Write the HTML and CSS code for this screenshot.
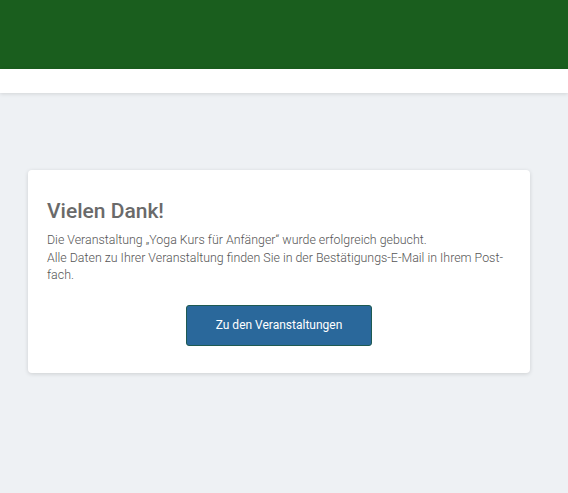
FILE: index.html
```html
<!DOCTYPE html>
<html lang="de">
<head>
<meta charset="utf-8">
<title>Vielen Dank</title>
<link rel="stylesheet" href="styles.css">
</head>
<body>
<header class="topbar"></header>
<nav class="subbar"></nav>
<main class="main">
  <section class="card">
    <h1 class="title">Vielen Dank!</h1>
    <p class="text">Die Veranstaltung „Yoga Kurs für Anfänger“ wurde erfolgreich gebucht.</p>
    <p class="text">Alle Daten zu Ihrer Veranstaltung finden Sie in der Bestätigungs-E-Mail in Ihrem Post-fach.</p>
    <div class="actions">
      <a class="button" href="#">Zu den Veranstaltungen</a>
    </div>
  </section>
</main>
</body>
</html>
```

FILE: styles.css
```css
html, body {
  margin: 0;
  padding: 0;
}
body {
  background: #eef1f4;
  font-family: Roboto, "Liberation Sans", sans-serif;
  min-height: 493px;
}
.topbar {
  height: 69px;
  background: #1a5e1e;
}
.subbar {
  height: 24px;
  background: #ffffff;
  box-shadow: 0 1px 4px rgba(0, 0, 0, 0.12);
  position: relative;
}
.main {
  padding-top: 77px;
}
.card {
  margin-left: 28px;
  width: 502px;
  box-sizing: border-box;
  background: #ffffff;
  border-radius: 4px;
  box-shadow: 0 1px 4px rgba(0, 0, 0, 0.14);
  padding: 28px 24px 27px 19px;
  height: 203px;
}
.title {
  margin: 0 0 7px 0;
  font-size: 21px;
  line-height: 26px;
  font-weight: 500;
  color: #6a6a6a;
}
.text {
  margin: 0;
  font-size: 12.4px;
  line-height: 17.5px;
  font-weight: 300;
  color: #555;
}
.actions {
  display: flex;
  justify-content: center;
  margin-top: 21px;
  padding-left: 5px;
}
.button {
  display: flex;
  align-items: center;
  justify-content: center;
  width: 186px;
  height: 41px;
  box-sizing: border-box;
  background: #2a689b;
  border: 1px solid #1e5a52;
  border-radius: 3px;
  color: #ffffff;
  font-size: 12px;
  font-weight: 400;
  text-decoration: none;
}
```
